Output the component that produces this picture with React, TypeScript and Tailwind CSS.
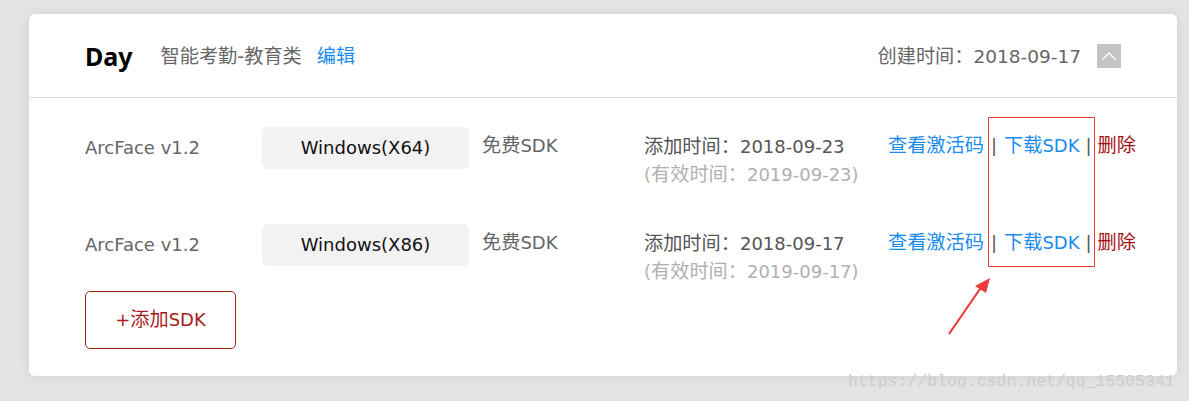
const font = { fontFamily: '"DejaVu Sans", "Noto Sans CJK SC", sans-serif' };

type Sdk = { platform: string; added: string; expires: string };

const sdks: Sdk[] = [
  { platform: "Windows(X64)", added: "2018-09-23", expires: "2019-09-23" },
  { platform: "Windows(X86)", added: "2018-09-17", expires: "2019-09-17" },
];

// chinese glyphs render a bit larger than latin in the original
const Zh = ({ children }: { children: React.ReactNode }) => (
  <span className="text-[19.2px]">{children}</span>
);

const SdkRow = ({ sdk }: { sdk: Sdk }) => (
  <div className="flex items-start text-[18px] whitespace-nowrap">
    <div className="w-[177px] shrink-0 pt-[7px] leading-[28px] text-[#666]">ArcFace v1.2</div>
    <div className="w-[207px] h-[42px] shrink-0 rounded-[6px] bg-[#f2f2f2] text-center leading-[42px] text-[#111]">
      {sdk.platform}
    </div>
    <div className="ml-[13px] w-[162px] shrink-0 pt-[5px] leading-[28px] text-[#666]">
      <Zh>免费</Zh>SDK
    </div>
    <div className="w-[244px] shrink-0 pt-[6px] leading-[28px]">
      <div className="text-[#555]">
        <Zh>添加时间：</Zh>
        {sdk.added}
      </div>
      <div className="text-[#b0b0b0]">
        (<Zh>有效时间：</Zh>
        {sdk.expires})
      </div>
    </div>
    <div className="flex shrink-0 pt-[5px] leading-[28px]">
      <a className="text-[#1a8cf0]">
        <Zh>查看激活码</Zh>
      </a>
      <span className="mx-[7px] text-[#555]">|</span>
      <a className="text-[#1a8cf0]">
        <Zh>下载</Zh>SDK
      </a>
      <span className="mx-[6px] text-[#555]">|</span>
      <a className="text-[#a30f0f]">
        <Zh>删除</Zh>
      </a>
    </div>
  </div>
);

export default function App() {
  return (
    <div className="relative min-h-[401px] bg-[#e4e4e4] pt-[14px] pl-[29px]" style={font}>
      <div className="relative w-[1148px] rounded-[6px] bg-white shadow-[0_0_14px_rgba(0,0,0,0.08)]">
        <div className="flex h-[84px] items-center border-b border-[#dedede] px-[56px] pt-[3px] whitespace-nowrap">
          <span
            className="text-[25px] font-bold text-black"
            style={{ fontFamily: '"Noto Sans", sans-serif' }}
          >
            Day
          </span>
          <span className="ml-[28px] text-[18.5px] text-[#666]">
            <Zh>智能考勤-教育类</Zh>
          </span>
          <a className="ml-[15px] text-[#1a8cf0]">
            <Zh>编辑</Zh>
          </a>
          <span className="ml-auto text-[18.5px] text-[#666]">
            <Zh>创建时间：</Zh>2018-09-17
          </span>
          <button className="ml-[16px] mb-[3px] flex h-[24px] w-[24px] items-center justify-center bg-[#c4c4c4]">
            <svg width="16" height="10" viewBox="0 0 16 10" fill="none">
              <path d="M1.5 8.5 L8 2 L14.5 8.5" stroke="white" strokeWidth="1.4" />
            </svg>
          </button>
        </div>

        <div className="px-[56px] pt-[29px] pb-[27px]">
          <div className="flex flex-col gap-[35px]">
            {sdks.map((s) => (
              <SdkRow key={s.platform} sdk={s} />
            ))}
          </div>
          <button className="mt-[5px] h-[58px] w-[151px] rounded-[5px] border border-[#a81c1c] text-[18px] text-[#a81c1c]">
            +<Zh>添加</Zh>SDK
          </button>
        </div>

        {/* annotation */}
        <div className="absolute left-[959px] top-[103px] h-[150px] w-[107px] border border-[#f03a3a]" />
        <svg className="absolute left-[915px] top-[258px]" width="50" height="65" viewBox="0 0 50 65">
          <path d="M5 62 L38 14" stroke="#f03a3a" strokeWidth="2.2" />
          <path d="M46 6 L31 14 L42 21 Z" fill="#f03a3a" />
        </svg>
      </div>

      <div
        className="absolute left-[848px] top-[370px] text-[16.5px] text-[#cdcdcd]"
        style={{ fontFamily: '"Liberation Mono", monospace' }}
      >
        https://blog.csdn.net/qq_15505341
      </div>
    </div>
  );
}
